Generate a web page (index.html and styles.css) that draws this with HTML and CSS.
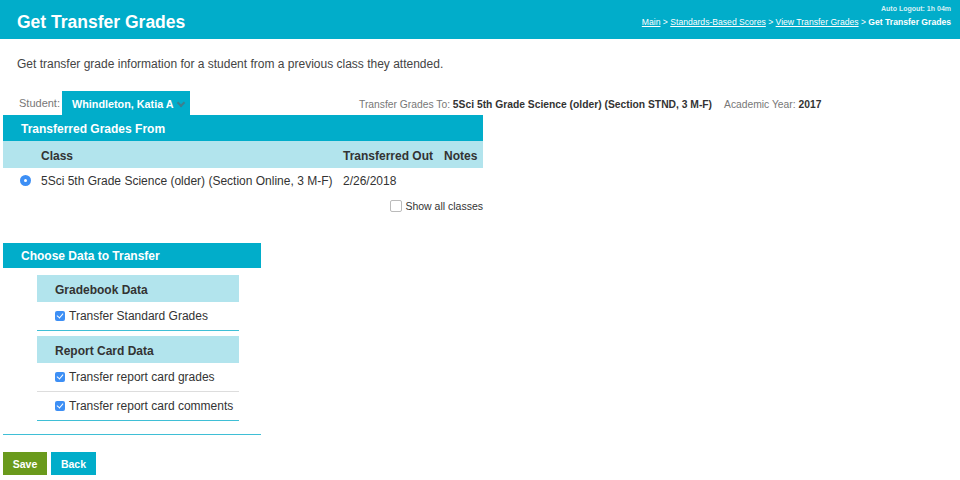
FILE: index.html
```html
<!DOCTYPE html>
<html>
<head>
    <title>Get Transfer Grades</title>
    <link rel="stylesheet" href="styles.css">
</head>
<body>
    <div class="topbar">
        <h1>Get Transfer Grades</h1>
        <div class="topbar-right">
            <div class="logout">Auto Logout: 1h 04m</div>
            <div class="crumbs">
                <a href="#">Main</a> &gt; <a href="#">Standards-Based Scores</a> &gt; <a href="#">View Transfer Grades</a> &gt; <b>Get Transfer Grades</b>
            </div>
        </div>
    </div>

    <p class="intro">Get transfer grade information for a student from a previous class they attended.</p>

    <div class="content">
        <div class="student-row">
            <span class="label">Student:</span>
            <div class="student-select">
                <span class="name">Whindleton, Katia A</span>
                <span class="chev"></span>
            </div>
            <span class="info">Transfer Grades To: <b>5Sci 5th Grade Science (older) (Section STND, 3 M-F)</b></span>
            <span class="info year">Academic Year: <b>2017</b></span>
        </div>

        <div class="from-box">
            <div class="box-title">Transferred Grades From</div>
            <table class="grades">
                <tr class="subhead">
                    <th class="col-radio"></th>
                    <th class="col-class">Class</th>
                    <th class="col-out">Transferred Out</th>
                    <th class="col-notes">Notes</th>
                </tr>
                <tr>
                    <td class="col-radio"><span class="radio"></span></td>
                    <td>5Sci 5th Grade Science (older) (Section Online, 3 M-F)</td>
                    <td>2/26/2018</td>
                    <td></td>
                </tr>
            </table>
            <label class="show-all"><span class="box"></span>Show all classes</label>
        </div>

        <div class="choose-box">
            <div class="box-title">Choose Data to Transfer</div>
            <div class="choose-inner">
                <div class="group-head">Gradebook Data</div>
                <div class="opt last"><span class="check"></span>Transfer Standard Grades</div>

                <div class="group-head second">Report Card Data</div>
                <div class="opt"><span class="check"></span>Transfer report card grades</div>
                <div class="opt last"><span class="check"></span>Transfer report card comments</div>
            </div>
        </div>

        <div class="buttons">
            <button class="btn save">Save</button>
            <button class="btn back">Back</button>
        </div>
    </div>
</body>
</html>
```

FILE: styles.css
```css
body {
    margin: 0;
    font-family: "Liberation Sans", Arial, sans-serif;
    color: #333;
    background: #fff;
}

.topbar {
    background-color: #01adca;
    height: 39px;
    display: flex;
    justify-content: space-between;
    align-items: flex-start;
    padding: 0 9px 0 17px;
    color: #fff;
}

.topbar h1 {
    margin: 0;
    font-size: 17.5px;
    line-height: 45px;
    font-weight: bold;
}

.topbar-right {
    text-align: right;
    padding-top: 4px;
}

.logout {
    font-size: 7px;
    font-weight: bold;
    color: #d4f0f5;
    line-height: 9px;
}

.crumbs {
    font-size: 8.6px;
    line-height: 19px;
}

.crumbs a {
    color: #fff;
}

.intro {
    margin: 17px 0 0 17px;
    font-size: 12px;
    line-height: 16px;
    color: #444;
}

.content {
    padding-left: 3px;
}

.student-row {
    display: flex;
    align-items: center;
    margin-top: 19px;
    height: 24px;
}

.label {
    font-size: 11px;
    color: #777;
    margin-left: 16px;
    width: 43px;
}

.student-select {
    background-color: #01adca;
    color: #fff;
    font-size: 10.8px;
    font-weight: bold;
    width: 118px;
    height: 24px;
    padding-left: 10px;
    display: flex;
    align-items: center;
    white-space: nowrap;
}

.name {
    padding-top: 2px;
}

.chev {
    display: block;
    width: 4px;
    height: 4px;
    border-right: 2px solid #3d7f8f;
    border-bottom: 2px solid #3d7f8f;
    transform: rotate(45deg);
    margin: 0 0 1px 4px;
    flex-shrink: 0;
}

.info {
    font-size: 10.3px;
    color: #777;
    margin-left: 169px;
    padding-top: 2px;
}

.info b {
    color: #333;
}

.info.year {
    margin-left: 12px;
}

.from-box {
    width: 480px;
}

.box-title {
    background-color: #01adca;
    color: #fff;
    font-size: 12px;
    font-weight: bold;
    height: 26px;
    line-height: 28px;
    padding-left: 18px;
}

.grades {
    width: 100%;
    border-collapse: collapse;
    font-size: 12px;
}

.subhead {
    background-color: #b2e4ed;
    height: 27px;
}

.grades th {
    text-align: left;
    font-weight: bold;
    padding: 2px 0 0 0;
}

.grades td {
    height: 26px;
    padding: 0;
}

.col-radio {
    width: 38px;
}

.col-out {
    width: 101px;
}

.col-notes {
    width: 39px;
}

.radio {
    display: inline-block;
    width: 11px;
    height: 11px;
    border-radius: 50%;
    background-color: #3d8ff5;
    margin-left: 17px;
    position: relative;
    top: 1px;
}

.radio::after {
    content: "";
    position: absolute;
    left: 4px;
    top: 4px;
    width: 3px;
    height: 3px;
    border-radius: 50%;
    background: #fff;
}

.show-all {
    display: flex;
    justify-content: flex-end;
    align-items: center;
    font-size: 10.5px;
    margin-top: 0;
    height: 24px;
}

.show-all .box {
    width: 10px;
    height: 10px;
    border: 1px solid #bbb;
    border-radius: 2px;
    margin-right: 3px;
}

.choose-box {
    width: 258px;
    margin-top: 25px;
    border-bottom: 1px solid #3fbfd6;
    padding-bottom: 13px;
}

.choose-box .box-title {
    height: 25px;
    line-height: 27px;
}

.choose-inner {
    width: 202px;
    margin: 7px 0 0 34px;
}

.group-head {
    background-color: #b2e4ed;
    height: 27px;
    line-height: 30px;
    font-size: 12px;
    font-weight: bold;
    padding-left: 18px;
}

.group-head.second {
    margin-top: 5px;
}

.opt {
    height: 28px;
    line-height: 28px;
    font-size: 12px;
    padding-left: 18px;
    border-bottom: 1px solid #ddd;
    display: flex;
    align-items: center;
}

.opt.last {
    border-bottom: 1px solid #3fbfd6;
}

.check {
    width: 10px;
    height: 10px;
    border-radius: 2px;
    background-color: #3d8ff5;
    margin-right: 4px;
    position: relative;
}

.check::after {
    content: "";
    position: absolute;
    left: 3px;
    top: 1px;
    width: 3px;
    height: 5px;
    border: solid #fff;
    border-width: 0 1.5px 1.5px 0;
    transform: rotate(40deg);
}

.buttons {
    display: flex;
    gap: 4px;
    margin-top: 17px;
}

.btn {
    border: none;
    color: #fff;
    font-family: "Liberation Sans", Arial, sans-serif;
    font-size: 10.5px;
    font-weight: bold;
    height: 23px;
    padding: 0;
    cursor: pointer;
}

.save {
    width: 44px;
    background-color: #6a9a1c;
}

.back {
    width: 45px;
    background-color: #01adca;
}
```
